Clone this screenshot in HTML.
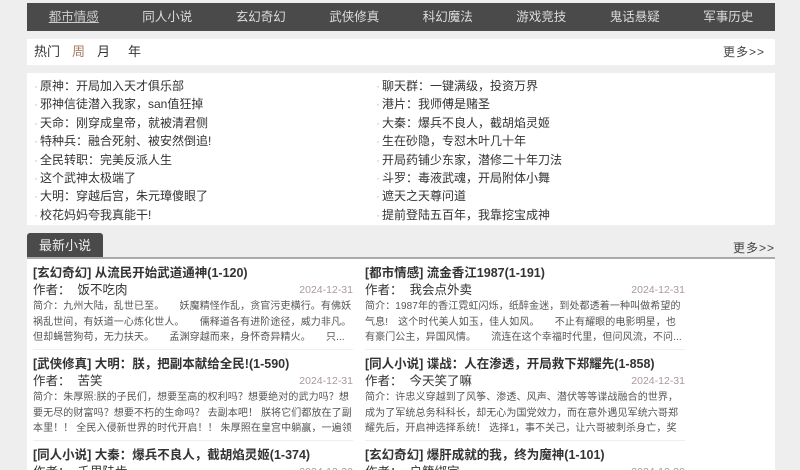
<!DOCTYPE html>
<html><head><meta charset="utf-8"><style>
*{margin:0;padding:0;box-sizing:border-box}
html,body{width:800px;height:470px;overflow:hidden}
body{background:#eeeeee;font-family:"Liberation Sans","Noto Sans CJK SC",sans-serif;color:#333;position:relative}
.nav{position:absolute;left:27px;top:3px;width:748px;height:28px;background:#4a4a4a;display:flex}
.nav a{width:93.5px;text-align:center;color:#ddd;font-size:12.5px;line-height:28px;text-decoration:none}
.nav a.u{text-decoration:underline;color:#ccc}
.hot{position:absolute;left:27px;top:39px;width:748px;height:26px;background:#fff;font-size:13px;line-height:26px;padding-left:7px}
.hot span{margin-right:12px}
.more{position:absolute;right:10px;font-size:12px;color:#444;letter-spacing:1px}
.list{position:absolute;left:27px;top:73px;width:748px;height:152px;background:#fff;padding-top:3px}
.col{position:absolute;top:4px;font-size:12px;line-height:18.4px}
.col div:before{content:"·";color:#bbb;margin-right:2px}
.tab{position:absolute;left:27px;top:233px;width:76px;height:25px;background:#4a4a4a;color:#eee;font-size:13px;line-height:25px;text-align:center;border-radius:3px 3px 0 0}
.line{position:absolute;left:27px;top:257px;width:748px;height:2px;background:#aaa}
.main{position:absolute;left:27px;top:259px;width:748px;height:211px;background:#fff;overflow:hidden}
.it{position:absolute;width:320px;height:91px;border-bottom:1px solid #eee}
.t{font-size:12.5px;font-weight:bold;line-height:16px;margin-top:6px;white-space:nowrap}
.a{font-size:12.5px;line-height:18px;position:relative}
.a i{position:absolute;right:0;font-style:normal;font-size:10.5px;color:#a99}
.d{font-size:10px;line-height:15.5px;color:#555;height:47px;overflow:hidden;letter-spacing:0.1px}
</style></head><body>
<div class="nav"><a class="u">都市情感</a><a>同人小说</a><a>玄幻奇幻</a><a>武侠修真</a><a>科幻魔法</a><a>游戏竞技</a><a>鬼话悬疑</a><a>军事历史</a></div>
<div class="hot"><span>热门</span><span style="color:#a76">周</span><span>月</span><span style="margin-left:6px">年</span><span class="more" style="margin:0">更多&gt;&gt;</span></div>
<div class="list">
<div class="col" style="left:7px"><div>原神：开局加入天才俱乐部</div><div>邪神信徒潜入我家，san值狂掉</div><div>天命：刚穿成皇帝，就被清君侧</div><div>特种兵：融合死射、被安然倒追!</div><div>全民转职：完美反派人生</div><div>这个武神太极端了</div><div>大明：穿越后宫，朱元璋傻眼了</div><div>校花妈妈夸我真能干!</div></div>
<div class="col" style="left:349px"><div>聊天群：一键满级，投资万界</div><div>港片：我师傅是赌圣</div><div>大秦：爆兵不良人，截胡焰灵姬</div><div>生在砂隐，专怼木叶几十年</div><div>开局药铺少东家，潜修二十年刀法</div><div>斗罗：毒液武魂，开局附体小舞</div><div>遮天之天尊问道</div><div>提前登陆五百年，我靠挖宝成神</div></div>
</div>
<div class="tab">最新小说</div>
<div class="more" style="top:239px;right:25px;position:absolute">更多&gt;&gt;</div>
<div class="line"></div>
<div class="main">
<div class="it" style="left:6px;top:0"><div class="t">[玄幻奇幻] 从流民开始武道通神(1-120)</div><div class="a">作者：&nbsp; 饭不吃肉<i>2024-12-31</i></div><div class="d">简介：九州大陆，乱世已至。　　妖魔精怪作乱，贪官污吏横行。有佛妖祸乱世间，有妖道一心炼化世人。　　儒释道各有进阶途径，威力非凡。但却蝇营狗苟，无力扶天。　　孟渊穿越而来，身怀奇异精火。　　只...</div></div>
<div class="it" style="left:338px;top:0"><div class="t">[都市情感] 流金香江1987(1-191)</div><div class="a">作者：&nbsp; 我会点外卖<i>2024-12-31</i></div><div class="d">简介：1987年的香江霓虹闪烁，纸醉金迷，到处都透着一种叫做希望的气息!　这个时代美人如玉，佳人如风。　　不止有耀眼的电影明星，也有豪门公主，异国风情。　　流连在这个幸福时代里，但问风流，不问...</div></div>
<div class="it" style="left:6px;top:91px"><div class="t">[武侠修真] 大明：朕，把副本献给全民!(1-590)</div><div class="a">作者：&nbsp; 苦笑<i>2024-12-31</i></div><div class="d">简介：朱厚照:朕的子民们，想要至高的权利吗？想要绝对的武力吗？想要无尽的财富吗？想要不朽的生命吗？ 去副本吧！ 朕将它们都放在了副本里！！ 全民入侵新世界的时代开启！！ 朱厚照在皇宫中躺赢，一遍领着...</div></div>
<div class="it" style="left:338px;top:91px"><div class="t">[同人小说] 谍战：人在渗透，开局救下郑耀先(1-858)</div><div class="a">作者：&nbsp; 今天笑了嘛<i>2024-12-31</i></div><div class="d">简介：许忠义穿越到了风筝、渗透、风声、潜伏等等谍战融合的世界，成为了军统总务科科长，却无心为国党效力，而在意外遇见军统六哥郑耀先后，开启神选择系统！ 选择1，事不关己，让六哥被刺杀身亡，奖励小金鱼百...</div></div>
<div class="it" style="left:6px;top:182px"><div class="t">[同人小说] 大秦：爆兵不良人，截胡焰灵姬(1-374)</div><div class="a">作者：&nbsp; 千里陆步<i>2024-12-30</i></div></div>
<div class="it" style="left:338px;top:182px"><div class="t">[玄幻奇幻] 爆肝成就的我，终为魔神(1-101)</div><div class="a">作者：&nbsp; 户籍绑定<i>2024-12-30</i></div></div>
</div>
</body></html>
